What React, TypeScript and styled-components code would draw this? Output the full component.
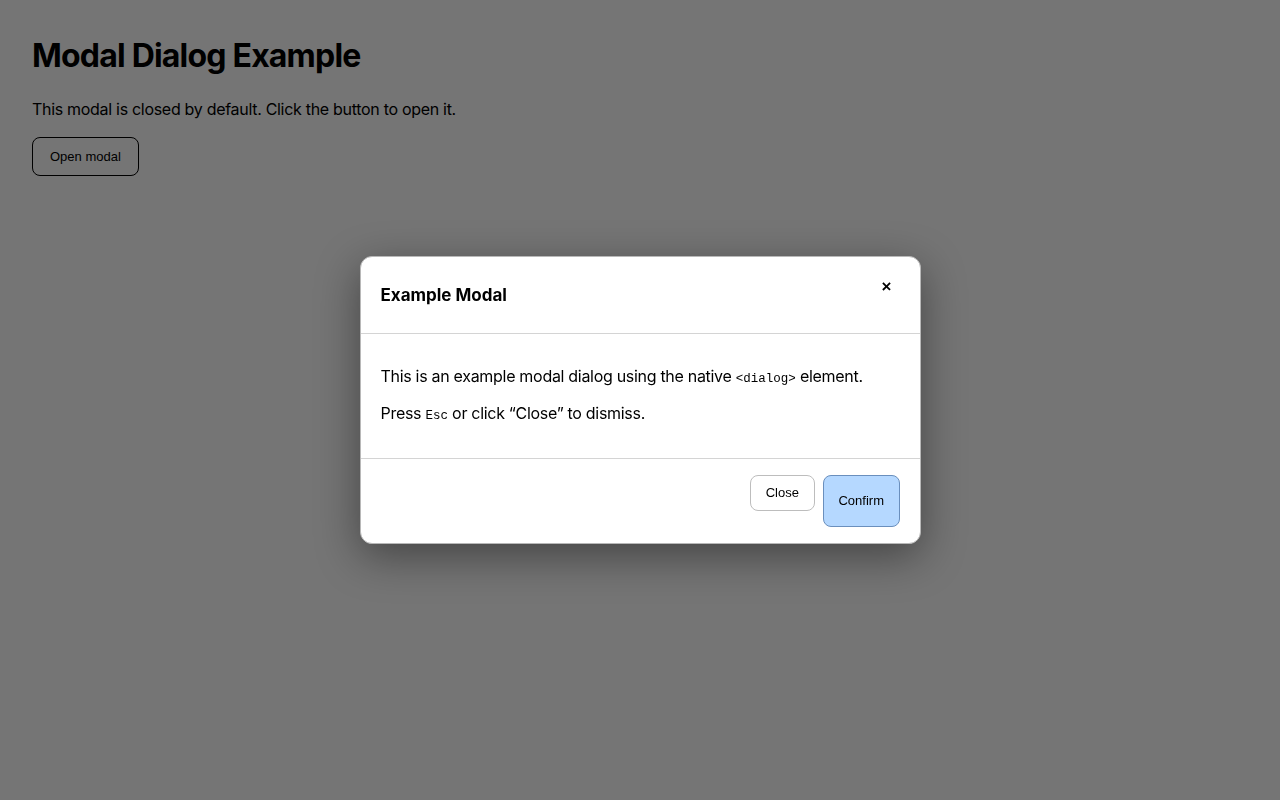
import React from "react";
import styled, { createGlobalStyle } from "styled-components";

const Global = createGlobalStyle`
  html, body { margin: 0; padding: 0; }
  body {
    background: #757575;
    font-family: Inter, "Noto Sans", sans-serif;
    color: #000;
    min-height: 800px;
  }
`;

const Page = styled.main`
  padding: 32px;
`;

const Title = styled.h1`
  margin: 4px 0 23px;
  font-size: 32px;
  line-height: 40px;
  font-weight: 700;
  letter-spacing: -0.8px;
`;

const Lead = styled.p`
  margin: 0 0 18px;
  font-size: 16px;
  line-height: 20px;
  letter-spacing: -0.3px;
`;

const Button = styled.button<{ $variant?: "ghost" | "plain" | "primary" }>`
  font-family: "Liberation Sans", Arial, sans-serif;
  font-size: 13px;
  line-height: 14px;
  color: #000;
  border-radius: 8px;
  cursor: pointer;
  ${({ $variant }) =>
    $variant === "primary"
      ? `background: #b5d8ff; border: 1px solid #6a8fbd; padding: 18px 14.5px;`
      : $variant === "plain"
      ? `background: #fff; border: 1px solid #bdbdbd; padding: 10px 15px;`
      : `background: transparent; border: 1px solid #000; padding: 11.5px 17px;`}
`;

const Backdrop = styled.div`
  position: fixed;
  inset: 0;
  display: flex;
  align-items: center;
  justify-content: center;
`;

const Dialog = styled.div`
  width: 561px;
  background: #fff;
  border: 1px solid #b8b8b8;
  border-radius: 12px;
  box-shadow: 0 12px 44px rgba(0, 0, 0, 0.42);
  box-sizing: border-box;
  overflow: hidden;
`;

const Header = styled.div`
  display: flex;
  justify-content: space-between;
  align-items: flex-start;
  padding: 20px 20px 20px;
  border-bottom: 1px solid #d4d4d4;
`;

const DialogTitle = styled.h2`
  margin: 0;
  font-size: 17px;
  line-height: 36px;
  font-weight: 700;
`;

const CloseX = styled.button`
  background: none;
  border: none;
  padding: 0 8px 0 0;
  font-family: "Liberation Sans", Arial, sans-serif;
  font-size: 17px;
  font-weight: 700;
  line-height: 20px;
  cursor: pointer;
  color: #000;
`;

const Body = styled.div`
  padding: 16px 20px 18px;
  border-bottom: 1px solid #d4d4d4;
`;

const Para = styled.p`
  margin: 16px 0;
  font-size: 16px;
  line-height: 21px;
  letter-spacing: -0.3px;
`;

const Code = styled.code`
  font-family: "Liberation Mono", "Courier New", monospace;
  font-size: 12.5px;
  line-height: 1;
  letter-spacing: 0;
`;

const Footer = styled.div`
  display: flex;
  justify-content: flex-end;
  align-items: flex-start;
  gap: 8px;
  padding: 16px 20px 16px;
`;

export default function App() {
  return (
    <>
      <Global />
      <Page>
        <Title>Modal Dialog Example</Title>
        <Lead>This modal is closed by default. Click the button to open it.</Lead>
        <Button>Open modal</Button>
      </Page>
      <Backdrop>
        <Dialog role="dialog" aria-modal="true">
          <Header>
            <DialogTitle>Example Modal</DialogTitle>
            <CloseX aria-label="Close">×</CloseX>
          </Header>
          <Body>
            <Para>
              This is an example modal dialog using the native <Code>&lt;dialog&gt;</Code> element.
            </Para>
            <Para>
              Press <Code>Esc</Code> or click “Close” to dismiss.
            </Para>
          </Body>
          <Footer>
            <Button $variant="plain">Close</Button>
            <Button $variant="primary">Confirm</Button>
          </Footer>
        </Dialog>
      </Backdrop>
    </>
  );
}
